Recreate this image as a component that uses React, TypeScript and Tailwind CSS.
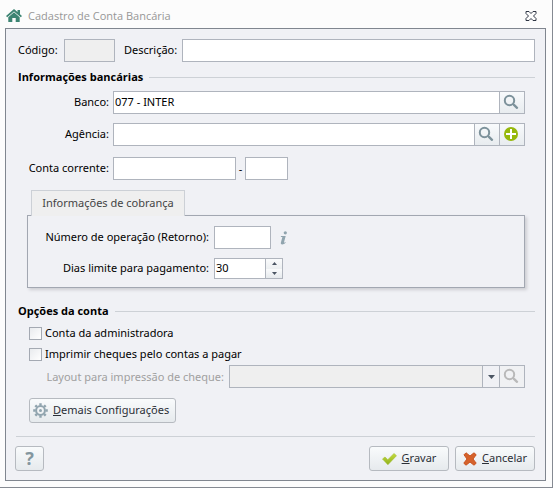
import { useId, useState } from "react";
import type { ReactNode } from "react";

const FIELD =
  "h-[23px] min-w-0 border border-[#afb4bd] bg-white px-px pb-0.5 text-[11px] text-black outline-none focus:border-[#6f8fa8]";
const LABEL = "pb-0.5 whitespace-nowrap";
const BUTTON =
  "flex h-[25px] items-center rounded-[3px] border border-[#b6bac0] bg-linear-to-b from-[#f9fbfc] to-[#e6eaed] text-[11px] text-[#2b2f36] hover:to-[#f1f5f8]";
const ADDON =
  "flex h-[23px] w-[25px] shrink-0 items-center justify-center border border-l-0 border-[#afb4bd] bg-linear-to-b from-[#f8fafc] to-[#e8ecef] pb-0.5 pr-0.5";

const HomeIcon = () => (
  <svg width="16" height="14" viewBox="0 0 16 14" fill="#3c8472">
    <path d="M8 0 0 7l1.200 1.200L8 2.400l6.800 5.800L16 7l-2-1.800V1h-2.500v2.100z" />
    <path d="M8 3.300 2.300 8.200V13H6.300V9h3.400v4h4V8.200z" />
  </svg>
);

const CloseIcon = () => (
  <svg width="12" height="10" viewBox="0 0 12 10" fill="#fdfdfd" stroke="#2f3644">
    <path d="M1 .5h3L6 2.500 8 .5h3v2L8.500 5 11 7.500v2H8L6 7.500 4 9.500H1v-2L3.500 5 1 2.500z" />
  </svg>
);

const SearchIcon = ({ color = "#7d929b" }: { color?: string }) => (
  <svg width="16" height="16" viewBox="0 0 16 16" fill="none" stroke={color}>
    <circle cx="6.500" cy="6.500" r="4.700" strokeWidth="2" />
    <path d="m10 10 1.500 1.500" strokeWidth="1.500" />
    <path d="m11.200 11.200 2.800 2.600" strokeWidth="2.400" strokeLinecap="round" />
  </svg>
);

const PlusIcon = () => (
  <svg width="14" height="14" viewBox="0 0 14 14">
    <circle cx="7" cy="7" r="7" fill="#96b80c" />
    <path d="M7 2v10M2 7h10" stroke="#fff" strokeWidth="2" />
  </svg>
);

const GearIcon = () => (
  <svg width="15" height="15" viewBox="-7.500 -7.500 15 15" stroke="#90a4ae" fill="none">
    <circle r="4.400" strokeWidth="2" />
    <circle r="1.500" fill="#90a4ae" stroke="none" />
    <path
      d="M0-7.300V-5M0 7.300V5M-7.300 0H-5M7.300 0H5M-5.200-5.200l1.600 1.600M5.200 5.200 3.600 3.600M-5.200 5.200l1.600-1.600M5.200-5.200 3.600-3.600"
      strokeWidth="2.400"
    />
  </svg>
);

const CheckIcon = () => (
  <svg width="15" height="12" viewBox="0 0 15 12">
    <defs>
      <linearGradient id="check" x1="0" y1="0" x2="0" y2="1">
        <stop offset="0" stopColor="#c5dc3e" />
        <stop offset="1" stopColor="#8fb01b" />
      </linearGradient>
    </defs>
    <path d="M.5 6 3 4l2.800 2.700L12 .5l2.500 2.200-8.600 9z" fill="url(#check)" stroke="#a3bf35" strokeWidth=".6" />
  </svg>
);

const CancelIcon = () => (
  <svg width="14" height="14" viewBox="0 0 14 14">
    <path
      d="M1 2.800 3 .8 7 4l4-3.200 2.200 2L10 7l3.200 4.200-2.200 2L7 10l-4 3.200-2.200-2L4 7z"
      fill="#d5622b"
      stroke="#c9531f"
      strokeLinejoin="round"
    />
  </svg>
);

const InfoIcon = () => (
  <svg width="8" height="14" viewBox="0 0 8 14" fill="#90a4ae">
    <circle cx="5.300" cy="1.800" r="1.600" />
    <path d="M1 5h4.700L4 11.300c-.1.500.4.500 1.400-.3l.3.600C4.500 13 3.400 13.500 2.300 13.500c-1.300 0-1.700-.8-1.400-2L2.400 6H.8z" />
  </svg>
);

const Arrow = ({ up = false }: { up?: boolean }) => (
  <svg width="5" height="3" viewBox="0 0 5 3" fill="#4b5563">
    <path d={up ? "M0 3h5L2.500 0z" : "M0 0h5L2.500 3z"} />
  </svg>
);

const SectionTitle = ({ children }: { children: ReactNode }) => (
  <div className="flex h-4 items-center gap-1.5 pl-3">
    <h2 className="whitespace-nowrap font-['Open_Sans',sans-serif] text-[11px] font-bold leading-4">{children}</h2>
    <div className="h-px flex-1 bg-[#cdd1d6]" />
  </div>
);

const CheckOption = ({ children }: { children: ReactNode }) => (
  <label className="flex h-[17px] items-center gap-[3px]">
    <input
      type="checkbox"
      className="h-[13px] w-[13px] shrink-0 appearance-none border border-[#a4a9b2] bg-linear-to-br from-[#e9ebee] to-white checked:bg-[#90a4ae]"
    />
    <span className={LABEL}>{children}</span>
  </label>
);

export default function App() {
  const id = useId();
  const [bank, setBank] = useState("077 - INTER");
  const [days, setDays] = useState(30);

  return (
    <div className="border-b border-r border-[#858a92] bg-[#fcfcfc] pb-1.5 pl-[5px] pr-1.5 font-['Noto_Sans',sans-serif] text-[11px] leading-4 text-black">
      <header className="flex h-7 items-center justify-between pr-[9px] pt-1">
        <h1 className="flex items-center gap-1.5 pl-px font-['Open_Sans',sans-serif] text-[#979797]">
          <HomeIcon />
          Cadastro de Conta Bancária
        </h1>
        <button type="button" aria-label="Fechar">
          <CloseIcon />
        </button>
      </header>

      <form
        className="border border-[#80868f] bg-[#f0f1f5] pb-[9px] pr-[10px] pt-[10px]"
        onSubmit={(e) => e.preventDefault()}
      >
        <div className="flex items-center pl-3">
          <label htmlFor={`${id}-code`} className={`${LABEL} w-[46px]`}>Código:</label>
          <input id={`${id}-code`} disabled className="h-[23px] w-[51px] border border-[#afb4bd] bg-[#efefef]" />
          <label htmlFor={`${id}-desc`} className={`${LABEL} w-[67px] pl-[9px]`}>Descrição:</label>
          <input id={`${id}-desc`} className={`${FIELD} flex-1`} />
        </div>

        <div className="mt-[7px]">
          <SectionTitle>Informações bancárias</SectionTitle>
        </div>

        <div className="mt-1.5 flex items-center gap-1 pr-[10px]">
          <label htmlFor={`${id}-bank`} className={`${LABEL} w-[103px] text-right`}>Banco:</label>
          <div className="flex flex-1">
            <input
              id={`${id}-bank`}
              value={bank}
              onChange={(e) => setBank(e.target.value)}
              className={`${FIELD} flex-1`}
            />
            <button type="button" aria-label="Pesquisar banco" className={ADDON}>
              <SearchIcon />
            </button>
          </div>
        </div>

        <div className="mt-[9px] flex items-center gap-1 pr-[10px]">
          <label htmlFor={`${id}-branch`} className={`${LABEL} w-[103px] text-right`}>Agência:</label>
          <div className="flex flex-1">
            <input id={`${id}-branch`} className={`${FIELD} flex-1`} />
            <button type="button" aria-label="Pesquisar agência" className={ADDON}>
              <SearchIcon />
            </button>
            <button type="button" aria-label="Adicionar agência" className={ADDON}>
              <PlusIcon />
            </button>
          </div>
        </div>

        <div className="mt-[11px] flex items-center">
          <label htmlFor={`${id}-account`} className={`${LABEL} mr-1 w-[103px] text-right`}>Conta corrente:</label>
          <input id={`${id}-account`} className={`${FIELD} w-[123px]`} />
          <span className="w-[9px] text-center">-</span>
          <input aria-label="Dígito" className={`${FIELD} w-[43px]`} />
        </div>

        <section className="mt-[10px] pl-[21px] pr-[10px]">
          <div role="tablist" className="flex pl-1">
            <button
              type="button"
              role="tab"
              aria-selected="true"
              className="relative -mb-px h-[26px] w-[154px] border border-b-0 border-[#ccd0d6] bg-[#efefef] pb-0.5 text-[#444]"
            >
              Informações de cobrança
            </button>
          </div>
          <div
            role="tabpanel"
            className="flex flex-col gap-[9px] border border-[#a2a7b1] pb-2 pt-[10px] shadow-[2px_2px_3px_#cdced3]"
          >
            <div className="flex items-center">
              <label htmlFor={`${id}-operation`} className={`${LABEL} mr-[5px] w-[181px] text-right`}>
                Número de operação (Retorno):
              </label>
              <input id={`${id}-operation`} className={`${FIELD} w-[57px]`} />
              <span className="ml-[9px]" title="Informação">
                <InfoIcon />
              </span>
            </div>
            <div className="flex items-center">
              <label htmlFor={`${id}-days`} className={`${LABEL} mr-[5px] w-[181px] text-right`}>
                Dias limite para pagamento:
              </label>
              <div className="flex h-[21px] w-[69px] border border-[#afb4bd]">
                <input
                  id={`${id}-days`}
                  value={days}
                  onChange={(e) => setDays(Number(e.target.value) || 0)}
                  className="min-w-0 flex-1 bg-white px-px pb-0.5 outline-none"
                />
                <div className="flex w-[17px] flex-col border-l border-[#afb4bd]">
                  <button
                    type="button"
                    aria-label="Aumentar"
                    onClick={() => setDays(days + 1)}
                    className="flex flex-1 items-center justify-center bg-linear-to-b from-[#fafbfc] to-[#eceff1]"
                  >
                    <Arrow up />
                  </button>
                  <button
                    type="button"
                    aria-label="Diminuir"
                    onClick={() => setDays(days - 1)}
                    className="flex flex-1 items-center justify-center bg-linear-to-b from-[#fafbfc] to-[#e6eaed]"
                  >
                    <Arrow />
                  </button>
                </div>
              </div>
            </div>
          </div>
        </section>

        <div className="mt-[15px]">
          <SectionTitle>Opções da conta</SectionTitle>
        </div>

        <div className="mt-1.5 flex flex-col gap-1 pl-[23px]">
          <CheckOption>Conta da administradora</CheckOption>
          <CheckOption>Imprimir cheques pelo contas a pagar</CheckOption>
        </div>

        <div className="mt-0.5 flex items-center pr-[10px]">
          <label htmlFor={`${id}-layout`} className="mr-[5px] w-[218px] whitespace-nowrap text-right text-[#a0a0a0]">
            Layout para impressão de cheque:
          </label>
          <div className="relative flex flex-1">
            <select
              id={`${id}-layout`}
              disabled
              className="h-[23px] min-w-0 flex-1 appearance-none border border-[#afb4bd] bg-[#efefef] opacity-100"
            />
            <span className="pointer-events-none absolute inset-y-0 right-[25px] flex w-[18px] items-center justify-center border border-[#afb4bd] bg-[#f0f1f5]">
              <svg width="7" height="4" viewBox="0 0 7 4" fill="#4b5563">
                <path d="M0 0h7L3.500 4z" />
              </svg>
            </span>
            <button
              type="button"
              disabled
              aria-label="Pesquisar layout"
              className="flex h-[23px] w-[25px] items-center justify-center border border-l-0 border-[#afb4bd] bg-[#f0f1f3] pb-0.5 pr-0.5"
            >
              <SearchIcon color="#b9b9b9" />
            </button>
          </div>
        </div>

        <div className="mt-[10px] pl-[23px]">
          <button type="button" className={`${BUTTON} gap-[5px] pl-[3px] pr-1.5`}>
            <GearIcon />
            <span className={LABEL}>
              <u>D</u>emais Configurações
            </span>
          </button>
        </div>

        <div className="ml-[10px] mt-[13px] h-px bg-[#cdd1d6]" />

        <div className="mt-[9px] flex items-center gap-1.5 pl-[9px]">
          <button
            type="button"
            aria-label="Ajuda"
            className={`${BUTTON} mr-auto w-[29px] justify-center`}
          >
            <span className="pb-0.5 text-[18px] font-bold text-[#84979f]">?</span>
          </button>
          <button type="submit" className={`${BUTTON} w-20 justify-center gap-[5px]`}>
            <CheckIcon />
            <span className={LABEL}>
              <u>G</u>ravar
            </span>
          </button>
          <button type="button" className={`${BUTTON} w-20 justify-center gap-[5px]`}>
            <CancelIcon />
            <span className={LABEL}>
              <u>C</u>ancelar
            </span>
          </button>
        </div>
      </form>
    </div>
  );
}
